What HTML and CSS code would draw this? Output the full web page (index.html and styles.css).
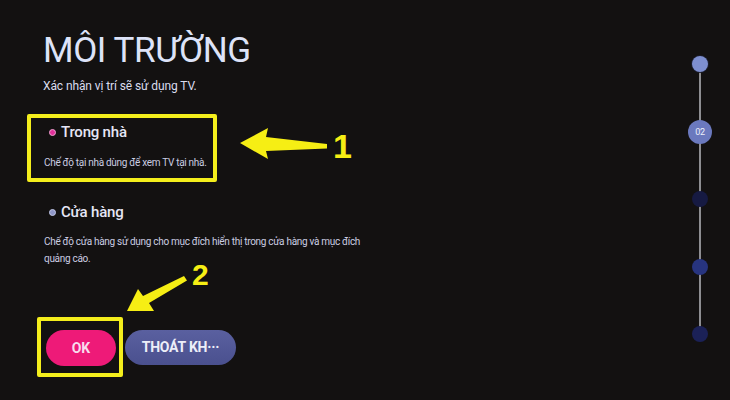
FILE: index.html
```html
<!DOCTYPE html>
<html lang="vi">
<head>
<meta charset="utf-8">
<title>Môi trường</title>
<link rel="stylesheet" href="styles.css">
</head>
<body>
<div class="screen">
  <main class="content">
    <h1 class="title">MÔI TRƯỜNG</h1>
    <p class="subtitle">Xác nhận vị trí sẽ sử dụng TV.</p>

    <section class="option option-marked">
      <div class="option-head"><span class="dot dot-on"></span>Trong nhà</div>
      <p class="option-desc">Chế độ tại nhà dùng để xem TV tại nhà.</p>
    </section>

    <section class="option">
      <div class="option-head"><span class="dot dot-off"></span>Cửa hàng</div>
      <p class="option-desc option-desc-wide">Chế độ cửa hàng sử dụng cho mục đích hiển thị trong cửa hàng và mục đích quảng cáo.</p>
    </section>

    <div class="actions">
      <div class="ok-frame"><button class="btn btn-ok">OK</button></div>
      <button class="btn btn-exit">THOÁT KH···</button>
    </div>
  </main>

  <aside class="stepper">
    <div class="step"><span class="node node-done"></span></div>
    <div class="step"><span class="node node-current">02</span></div>
    <div class="step"><span class="node node-next"></span></div>
    <div class="step"><span class="node node-next node-mid"></span></div>
    <div class="step"><span class="node node-next node-last"></span></div>
  </aside>
</div>

<!-- callout arrows drawn over the screen -->
<svg class="callouts" width="730" height="400" viewBox="0 0 730 400">
  <polygon class="arrow" points="240,143 268,128 266,137 327,144 327,148.5 266,151 268,159"/>
  <text class="callout-num" x="333" y="158">1</text>
  <polygon class="arrow" points="127,311 138,289 143,296 184,276 187,280.5 149,303 154,311"/>
  <text class="callout-num callout-num-2" x="192" y="285">2</text>
</svg>
</body>
</html>
```

FILE: styles.css
```css
html, body {
  margin: 0;
  padding: 0;
}

body {
  width: 730px;
  height: 400px;
  overflow: hidden;
  position: relative;
  background: #131111;
  font-family: Roboto, "Noto Sans", sans-serif;
  color: #dfe3f6;
}

.screen {
  display: flex;
  height: 400px;
}

.content {
  flex: 1;
  padding: 30px 0 0 27px;
}

.title {
  margin: 0 0 0 16px;
  font-size: 35px;
  font-weight: 400;
  line-height: 42px;
  letter-spacing: -0.4px;
  color: #dde3f8;
}

.subtitle {
  margin: 6px 0 0 16px;
  font-size: 12px;
  line-height: 16px;
  letter-spacing: -0.1px;
  color: #dadcee;
}

.option {
  padding-left: 17px;
  margin-top: 20px;
}

.option-marked {
  width: 165px;
  border: 4px solid #f4ee1c;
  border-radius: 2px;
  padding: 4px 4px 8px 13px;
}

.option-head {
  display: flex;
  align-items: center;
  font-size: 15px;
  line-height: 20px;
  font-weight: 500;
  letter-spacing: -0.2px;
  color: #e6e6f6;
}

.dot {
  width: 7px;
  height: 7px;
  border-radius: 50%;
  margin: 0 5px 0 5px;
  box-sizing: border-box;
}

.dot-on {
  background: #e0309a;
  border: 1px solid #f0a0d0;
}

.dot-off {
  background: #8f97c8;
  border: 1px solid #c0c6e6;
}

.option-desc {
  margin: 14px 0 0;
  font-size: 10px;
  line-height: 14px;
  letter-spacing: -0.3px;
  white-space: nowrap;
  color: #cbcde2;
}

.option-desc-wide {
  margin-top: 11px;
  width: 320px;
  line-height: 17px;
  white-space: normal;
}

.actions {
  display: flex;
  align-items: center;
  gap: 2px;
  margin: 50px 0 0 10px;
}

.ok-frame {
  border: 4px solid #f4ee1c;
  border-radius: 2px;
  padding: 9px 3px 7px 5px;
}

.btn {
  display: block;
  border: none;
  font-family: Roboto, "Noto Sans", sans-serif;
  font-weight: 700;
  font-size: 14px;
  padding: 0;
  cursor: pointer;
}

.btn-ok {
  width: 70px;
  height: 36px;
  border-radius: 18px;
  background: #ee1a78;
  color: #f8dcee;
}

.btn-exit {
  width: 111px;
  height: 35px;
  border-radius: 18px;
  background: linear-gradient(#5a60a0, #4a508e);
  color: #eceef8;
  letter-spacing: -0.2px;
}

/* vertical progress track */
.stepper {
  position: relative;
  width: 24px;
  margin-right: 18px;
  padding-top: 52px;
  display: flex;
  flex-direction: column;
  gap: 43.5px;
}

.stepper::before {
  content: "";
  position: absolute;
  left: 11px;
  top: 64px;
  width: 2px;
  height: 270px;
  background: #8e8e92;
}

.step {
  position: relative;
  height: 24px;
  display: flex;
  align-items: center;
  justify-content: center;
}

.node {
  width: 16px;
  height: 16px;
  border-radius: 50%;
  display: flex;
  align-items: center;
  justify-content: center;
}

.node-done {
  background: #7e8fd0;
  box-shadow: 0 0 0 1px #1b1d2c;
}

.node-current {
  width: 24px;
  height: 24px;
  background: #6b79be;
  color: #eef0fb;
  font-size: 9px;
  letter-spacing: -0.2px;
}

.node-next {
  background: #161a42;
}

.node-mid {
  background: #27347f;
}

.node-last {
  background: #1b2157;
}

.callouts {
  position: absolute;
  left: 0;
  top: 0;
  pointer-events: none;
}

.arrow {
  fill: #f6ee14;
}

.callout-num {
  font-family: "Liberation Sans", Arial, sans-serif;
  font-weight: 700;
  font-size: 34px;
  fill: #f6ee14;
  stroke: #111;
  stroke-width: 3px;
  paint-order: stroke;
}

.callout-num-2 {
  font-size: 30px;
}
```
